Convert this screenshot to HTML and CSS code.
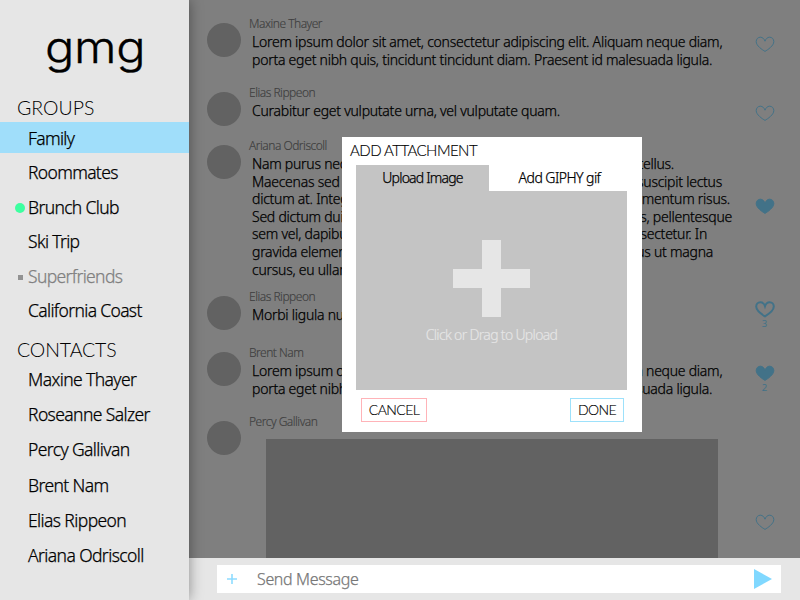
FILE: index.html
```html
<!DOCTYPE html>
<html lang="en">
<head>
<meta charset="utf-8">
<title>gmg</title>
<link rel="stylesheet" href="styles.css">
</head>
<body>
<svg width="0" height="0" class="defs"><symbol id="heart" viewBox="0 0 20 17"><path d="M10 15.4C7.2 13.7 1.2 9.8 1.2 5.6C1.2 3 3 1.2 5.3 1.2C7.7 1.2 9.3 3 10 5.2C10.7 3 12.3 1.2 14.7 1.2C17 1.2 18.8 3 18.8 5.6C18.8 9.8 12.8 13.7 10 15.4Z"/></symbol></svg>
<div class="app">
  <aside class="sidebar">
    <h1 class="logo">gmg</h1>
    <h2>GROUPS</h2>
    <ul class="groups">
      <li class="active"><span>Family</span></li>
      <li><span>Roommates</span></li>
      <li class="unread"><span>Brunch Club</span></li>
      <li><span>Ski Trip</span></li>
      <li class="muted"><span>Superfriends</span></li>
      <li><span>California Coast</span></li>
    </ul>
    <h2 class="second">CONTACTS</h2>
    <ul class="contacts">
      <li>Maxine Thayer</li>
      <li>Roseanne Salzer</li>
      <li>Percy Gallivan</li>
      <li>Brent Nam</li>
      <li>Elias Rippeon</li>
      <li>Ariana Odriscoll</li>
    </ul>
  </aside>
  <main class="main">
    <section class="feed">
      <article class="msg">
        <i class="avatar"></i>
        <div class="content"><h3>Maxine Thayer</h3>
          <p>Lorem ipsum dolor sit amet, consectetur adipiscing elit. Aliquam neque diam,<br>porta eget nibh quis, tincidunt tincidunt diam. Praesent id malesuada ligula.</p></div>
        <div class="like"><svg><use href="#heart"/></svg></div>
      </article>
      <article class="msg">
        <i class="avatar"></i>
        <div class="content"><h3>Elias Rippeon</h3><p>Curabitur eget vulputate urna, vel vulputate quam.</p></div>
        <div class="like"><svg><use href="#heart"/></svg></div>
      </article>
      <article class="msg">
        <i class="avatar"></i>
        <div class="content"><h3>Ariana Odriscoll</h3>
          <div class="lines">
            <p class="l1"><span>Nam purus nec</span><span>tellus.</span></p>
            <p class="l2"><span>Maecenas sed</span><span>suscipit lectus</span></p>
            <p class="l3"><span>dictum at. Integer</span><span>elementum risus.</span></p>
            <p class="l4"><span>Sed dictum dui</span><span>lacus, pellentesque</span></p>
            <p class="l5"><span>sem vel, dapibus</span><span>consectetur. In</span></p>
            <p class="l6"><span>gravida elementum</span><span>purus ut magna</span></p>
            <p><span>cursus, eu ullamcorper</span></p>
          </div></div>
        <div class="like mid filled"><svg><use href="#heart"/></svg></div>
      </article>
      <article class="msg">
        <i class="avatar"></i>
        <div class="content"><h3>Elias Rippeon</h3><p>Morbi ligula nunc</p></div>
        <div class="like high bold"><svg><use href="#heart"/></svg><span>3</span></div>
      </article>
      <article class="msg">
        <i class="avatar"></i>
        <div class="content"><h3>Brent Nam</h3>
          <p>Lorem ipsum dolor sit amet, consectetur adipiscing elit. Aliquam neque diam,<br>porta eget nibh quis, tincidunt tincidunt diam. Praesent id malesuada ligula.</p></div>
        <div class="like filled"><svg><use href="#heart"/></svg><span>2</span></div>
      </article>
      <article class="msg">
        <i class="avatar"></i>
        <div class="content"><h3>Percy Gallivan</h3><div class="image"></div></div>
        <div class="like low"><svg><use href="#heart"/></svg></div>
      </article>
    </section>
    <footer class="composer">
      <div class="field">
        <svg class="add" viewBox="0 0 10 10"><path d="M5 0V10M0 5H10"/></svg>
        <span>Send Message</span>
        <svg class="send" viewBox="0 0 18 20"><path d="M0 0L18 10L0 20Z"/></svg>
      </div>
    </footer>
  </main>
  <div class="modal">
    <h2>ADD ATTACHMENT</h2>
    <div class="tabs"><div class="tab on"><span>Upload Image</span></div><div class="tab"><span>Add GIPHY gif</span></div></div>
    <div class="drop">
      <svg viewBox="0 0 77 77"><path d="M29 0H48V29H77V48H48V77H29V48H0V29H29Z"/></svg>
      <span>Click or Drag to Upload</span>
    </div>
    <div class="actions"><button class="cancel">CANCEL</button><button class="done">DONE</button></div>
  </div>
</div>
</body>
</html>
```
FILE: styles.css
```css
* { box-sizing: border-box; margin: 0; padding: 0; }
body { width: 800px; height: 600px; overflow: hidden; font-family: "Noto Sans", sans-serif; font-weight: 300; color: #000; white-space: nowrap; }
ul { list-style: none; }
svg { display: block; }
.defs { position: absolute; }
.app { position: relative; display: flex; width: 800px; height: 600px; }

.sidebar { position: relative; z-index: 1; width: 189px; height: 600px; background: #e6e6e6; box-shadow: 0 0 13px rgba(0,0,0,.4); }
.logo { height: 96px; padding-top: 19px; margin-left: 45px; font: 300 43.5px/56px Inter, sans-serif; letter-spacing: -.3px; transform: scaleX(1.12); transform-origin: 0 0; -webkit-text-stroke: .3px currentColor; }
.sidebar h2 { height: 25px; padding-left: 17px; font: 300 19.5px/23px Lato, sans-serif; }
.sidebar h2.second { height: 25px; margin-top: 9px; padding-top: 1px; letter-spacing: -.1px; }
.groups, .contacts { font-size: 17.5px; letter-spacing: -.66px; -webkit-text-stroke: .25px currentColor; }
.contacts { letter-spacing: -.6px; }
.groups li { display: flex; align-items: center; height: 34.5px; padding-left: 28px; }
.groups .active { height: 31px; margin: 1px 0 2px; background: #a0defa; }
.contacts li { height: 35.4px; padding-left: 28px; line-height: 35px; }
.groups .unread { padding-left: 15px; }
.unread::before { content: ""; width: 10px; height: 10px; margin: 2px 3px 0 0; border-radius: 50%; background: #3dffa0; }
.groups .muted { padding-left: 18px; color: #808080; }
.muted::before { content: ""; width: 5px; height: 5px; margin: 3px 5px 0 0; background: #929292; }

.main { display: flex; flex-direction: column; width: 611px; height: 600px; }
.feed { display: grid; grid-template-rows: 69px 53px 151px 56px 69px 145px; height: 558px; padding-top: 15px; background: #7f7f7f; overflow: hidden; }
.msg { display: flex; padding-left: 18px; }
.avatar { width: 34px; height: 34px; margin: 8px 8px 0 0; border-radius: 50%; background: #626262; }
.content { width: 507px; }
.content h3 { font-size: 12px; font-weight: 300; line-height: 18px; letter-spacing: -.5px; color: #404040; -webkit-text-stroke: .15px currentColor; }
.content p { padding-left: 3px; font-size: 14px; line-height: 17.6px; letter-spacing: -.25px; -webkit-text-stroke: .25px currentColor; }
.lines p { display: flex; justify-content: space-between; }
.l1 { width: 425px; }
.l2 { width: 473px; }
.l3 { width: 481px; }
.l4 { width: 483px; }
.l5 { width: 458px; }
.l6 { width: 464px; }
.image { width: 452px; height: 128px; margin: 8px 0 0 17px; background: #626262; }
.like { width: 20px; padding-top: 21px; margin-left: -1px; color: #427288; }
.like svg { width: 20px; height: 17px; margin-left: .4px; fill: none; stroke: currentColor; stroke-width: 1; }
.like.mid { padding-top: 61px; }
.like.high { padding-top: 13px; }
.like.low { padding-top: 101px; }
.like.filled svg { fill: currentColor; }
.like.bold svg { stroke-width: 2; }
.like span { display: block; text-align: center; padding-right: 1px; font-size: 9.5px; font-weight: 400; line-height: 12px; }

.composer { height: 42px; padding: 7px 19px 7px 28px; background: #e6e6e6; }
.field { display: flex; align-items: center; height: 28px; padding: 0 9px 0 10px; background: #fff; font-size: 16px; letter-spacing: -.35px; color: #777; -webkit-text-stroke: .25px currentColor; }
.add { width: 10px; height: 10px; margin-right: 20px; stroke: #8edcff; stroke-width: 1.6; }
.send { width: 18px; height: 20px; margin-left: auto; fill: #80d8ff; }

.modal { position: absolute; z-index: 2; left: 342px; top: 137px; width: 300px; height: 295px; padding: 0 15px 0 14px; background: #fff; }
.modal h2 { height: 28px; margin-left: -6px; font: 300 15px/27px Lato, sans-serif; letter-spacing: -.55px; -webkit-text-stroke: .15px currentColor; }
.tabs { display: flex; }
.tab { flex: 1; height: 26px; padding-left: 3px; text-align: center; font-size: 14px; line-height: 26px; letter-spacing: -.55px; -webkit-text-stroke: .25px currentColor; }
.tab.on { flex: 0 0 133px; padding: 0; letter-spacing: -.8px; background: #c4c4c4; }
.drop { display: flex; flex-direction: column; align-items: center; height: 199px; padding-top: 49px; background: #c4c4c4; color: #e6e6e6; font-size: 14px; line-height: 20px; letter-spacing: -.68px; -webkit-text-stroke: .15px currentColor; }
.drop svg { width: 77px; height: 77px; margin-bottom: 8px; fill: #e6e6e6; }
.actions { display: flex; justify-content: space-between; padding: 8px 3px 0 5px; }
.actions button { height: 24px; background: #fff; font: 300 14px/20px Lato, sans-serif; letter-spacing: -.6px; color: #000; -webkit-text-stroke: .15px currentColor; }
.actions .cancel { width: 66px; border: 1px solid #ffb3b8; }
.actions .done { width: 54px; border: 1px solid #9de1fb; }
```
